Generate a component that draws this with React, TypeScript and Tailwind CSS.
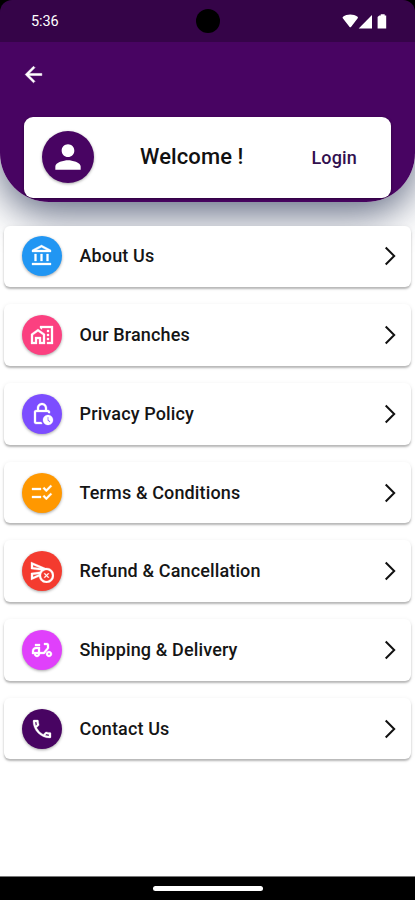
import type { IconType } from 'react-icons'
import {
  MdArrowBack,
  MdOutlineAccountBalance,
  MdOutlineCancelScheduleSend,
  MdOutlineChecklistRtl,
  MdOutlineDeliveryDining,
  MdOutlineHomeWork,
  MdOutlineLockClock,
  MdOutlinePhone,
  MdPerson,
} from 'react-icons/md'

interface MenuItem {
  label: string
  icon: IconType
  color: string
}

const items: MenuItem[] = [
  { label: 'About Us', icon: MdOutlineAccountBalance, color: 'bg-[#2196f3]' },
  { label: 'Our Branches', icon: MdOutlineHomeWork, color: 'bg-[#fb4080]' },
  { label: 'Privacy Policy', icon: MdOutlineLockClock, color: 'bg-[#7c4dff]' },
  { label: 'Terms & Conditions', icon: MdOutlineChecklistRtl, color: 'bg-[#ff9800]' },
  { label: 'Refund & Cancellation', icon: MdOutlineCancelScheduleSend, color: 'bg-[#f43b2f]' },
  { label: 'Shipping & Delivery', icon: MdOutlineDeliveryDining, color: 'bg-[#e040fb]' },
  { label: 'Contact Us', icon: MdOutlinePhone, color: 'bg-[#480462]' },
]

function StatusBar() {
  return (
    <div className="bg-black">
      <div className="relative flex h-[42px] items-center justify-between rounded-t-[12px] bg-[#350448] pr-[27px] pl-[31px] text-white">
        <span className="pt-[2px] text-[14.5px] leading-none tracking-[-0.1px]">5:36</span>
        <span className="absolute top-[9px] left-[196px] size-[24px] rounded-full bg-black" />
        <svg width="46" height="16" viewBox="0 0 46 16" fill="currentColor">
          <path d="M1 3.8C5 .8 11.5.8 15.6 3.8c.5.4.5.9.1 1.4L9 14q-.7.7-1.4 0L.8 5.2C.4 4.7.5 4.2 1 3.8z" />
          <path d="M16.7 15.5 30 2V15.5z" />
          <path d="M37.2 2.500h1.500V1.200h4v1.300h1.500V15.500h-8.600V4z" />
        </svg>
      </div>
    </div>
  )
}

function Header() {
  return (
    <header className="h-[202px] shrink-0 overflow-hidden rounded-b-[49px] bg-[#480462]">
      <StatusBar />
      <div className="flex h-[74.5px] items-start pt-[19.5px] pl-[21px]">
        {/* the icon's transparent bounding path must stay unstroked */}
        <MdArrowBack className="size-[25px] text-white [&_path[fill=none]]:stroke-none" stroke="currentColor" strokeWidth="0.5" />
      </div>
      <div className="mx-[24px] flex h-[81px] items-center rounded-[9px] bg-white pr-[34px] pl-[18px] shadow-[0_1px_3px_rgba(0,0,0,0.4)]">
        <div className="flex size-[52px] items-center justify-center rounded-full bg-[#480462] shadow-[0_1px_3px_rgba(0,0,0,0.35)]">
          <MdPerson className="size-[38px] text-white" />
        </div>
        <span className="ml-[46px] text-[22px] leading-none font-medium tracking-[0.1px] text-[#111]">Welcome !</span>
        <span className="ml-auto pt-px text-[18px] leading-none font-medium tracking-[0.15px] text-[#32104f]">Login</span>
      </div>
    </header>
  )
}

function Chevron() {
  return (
    <svg className="mr-[4px] ml-auto" width="12" height="20" viewBox="0 0 12 20" fill="none" stroke="#111" strokeWidth="2">
      <path d="M1.7 1.5 10.2 10 1.7 18.5" />
    </svg>
  )
}

function MenuRow({ label, icon: Icon, color }: MenuItem) {
  return (
    <li className="flex h-[61.5px] items-center rounded-[6px] bg-white pr-[11px] pl-[17.5px] shadow-[0_2px_2px_rgba(0,0,0,0.25),0_1px_5px_rgba(0,0,0,0.07)]">
      <div
        className={`flex size-[40px] items-center justify-center rounded-full text-white shadow-[0_1px_3px_rgba(0,0,0,0.35)] ${color}`}
      >
        <Icon className="size-[24px] [&_path[fill=none]]:stroke-none" stroke="currentColor" strokeWidth="0.3" />
      </div>
      <span className="ml-[18px] text-[18px] leading-none font-medium tracking-[0.14px] text-[#151515]">{label}</span>
      <Chevron />
    </li>
  )
}

export default function App() {
  return (
    <div className="flex h-[900px] w-[415px] flex-col overflow-hidden bg-white font-[Roboto,sans-serif]">
      <div className="shrink-0 rounded-b-[49px] shadow-[0_12px_40px_rgba(28,42,75,0.7)]">
        <Header />
      </div>
      <ul className="relative mx-[4px] mt-[23.7px] flex flex-1 flex-col gap-[17.2px]">
        {items.map((item) => (
          <MenuRow key={item.label} {...item} />
        ))}
      </ul>
      <div className="flex h-[24px] shrink-0 items-center justify-center border-t border-[#777] bg-black">
        <span className="h-[5px] w-[110px] rounded-full bg-white" />
      </div>
    </div>
  )
}
